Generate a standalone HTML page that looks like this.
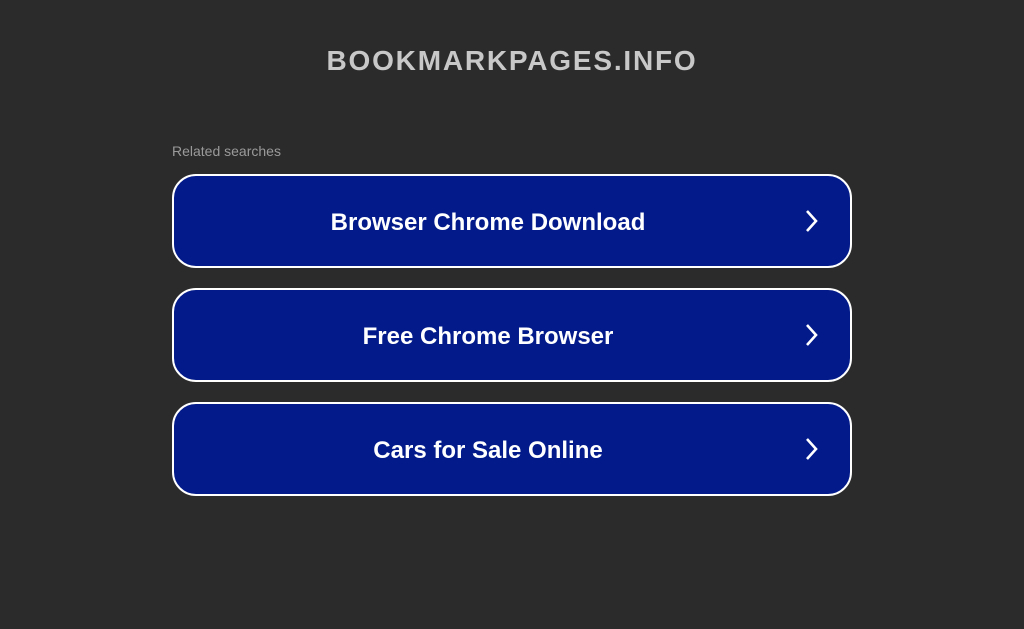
<!DOCTYPE html>
<html><head><style>
html,body{margin:0;padding:0;background:#2b2b2b;width:1024px;height:629px;overflow:hidden;font-family:"Liberation Sans",Arial,sans-serif}
h1{position:absolute;top:44px;left:0;width:1024px;text-align:center;margin:0;font-size:28px;font-weight:bold;color:#c8c8c8;letter-spacing:1.8px;line-height:34px}
.rel{position:absolute;left:172px;top:143px;font-size:14px;color:#9a9a9a;line-height:16px}
.btn{position:absolute;left:172px;width:676px;height:90px;border:2px solid #fff;border-radius:24px;background:#021a8a;box-sizing:content-box}
.btn span{position:absolute;left:0;width:628px;top:2px;line-height:90px;text-align:center;color:#fff;font-size:24px;font-weight:bold}
.btn svg{position:absolute;left:629px;top:33px}
</style></head><body>
<h1>BOOKMARKPAGES.INFO</h1>
<div class="rel">Related searches</div>
<div class="btn" style="top:174px"><span>Browser Chrome Download</span><svg width="16" height="24" viewBox="0 0 16 24"><path d="M4 2 L13 12 L4 22" fill="none" stroke="#fff" stroke-width="2.6"/></svg></div>
<div class="btn" style="top:288px"><span>Free Chrome Browser</span><svg width="16" height="24" viewBox="0 0 16 24"><path d="M4 2 L13 12 L4 22" fill="none" stroke="#fff" stroke-width="2.6"/></svg></div>
<div class="btn" style="top:402px"><span>Cars for Sale Online</span><svg width="16" height="24" viewBox="0 0 16 24"><path d="M4 2 L13 12 L4 22" fill="none" stroke="#fff" stroke-width="2.6"/></svg></div>
</body></html>
